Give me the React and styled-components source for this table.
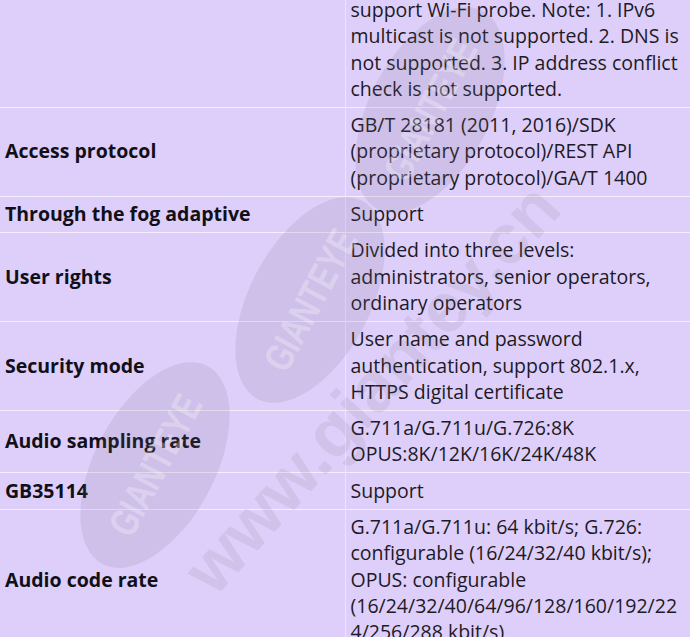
import styled, { createGlobalStyle } from "styled-components";

const GlobalStyle = createGlobalStyle`
    html, body {
        margin: 0;
        padding: 0;
        background: #ddcff9;
    }
    body {
        font-family: "Open Sans", "Noto Sans", sans-serif;
        color: #1d1a26;
        overflow: hidden;
    }
`;

const Page = styled.div`
    position: relative;
    width: 690px;
    height: 637px;
    overflow: hidden;
    background: #ddcff9;
`;

const Table = styled.table`
    width: 690px;
    margin-top: -7.5px;
    border-collapse: collapse;
    table-layout: fixed;
    font-size: 19.5px;
    line-height: 26.3px;
`;

const LabelCol = styled.col`
    width: 345px;
`;

const Row = styled.tr`
    border-bottom: 1px solid #f4eefe;
`;

const LabelCell = styled.td`
    padding: 4.5px 5px;
    vertical-align: middle;
    font-weight: 700;
    color: #111018;
    border-right: 1px solid #ece3fd;
    white-space: nowrap;
`;

const ValueCell = styled.td`
    padding: 4.5px 5px;
    vertical-align: top;
    overflow-wrap: anywhere;
`;

const Watermark = styled.svg`
    position: absolute;
    inset: 0;
    pointer-events: none;
`;

const rows = [
    {
        label: "",
        value: "support Wi-Fi probe. Note: 1. IPv6 multicast is not supported. 2. DNS is not supported. 3. IP address conflict check is not supported.",
    },
    {
        label: "Access protocol",
        value: "GB/T 28181 (2011, 2016)/SDK (proprietary protocol)/REST API (proprietary protocol)/GA/T 1400",
    },
    { label: "Through the fog adaptive", value: "Support" },
    {
        label: "User rights",
        value: "Divided into three levels: administrators, senior operators, ordinary operators",
    },
    {
        label: "Security mode",
        value: "User name and password authentication, support 802.1.x, HTTPS digital certificate",
    },
    {
        label: "Audio sampling rate",
        value: "G.711a/G.711u/G.726:8K OPUS:8K/12K/16K/24K/48K",
    },
    { label: "GB35114", value: "Support" },
    {
        label: "Audio code rate",
        value: "G.711a/G.711u: 64 kbit/s; G.726: configurable (16/24/32/40 kbit/s); OPUS: configurable (16/24/32/40/64/96/128/160/192/224/256/288 kbit/s)",
    },
];

function Badge({ x, y, angle }) {
    return (
        <g transform={`translate(${x} ${y}) rotate(${angle})`}>
            <ellipse rx="112" ry="60" fill="rgba(120,110,135,0.15)" />
            <text
                x="0"
                y="14"
                textAnchor="middle"
                fontFamily="'Liberation Sans', sans-serif"
                fontWeight="700"
                fontSize="40"
                fill="rgba(255,255,255,0.3)"
                transform="scale(0.75 1)"
            >
                GIANTEYE
            </text>
        </g>
    );
}

function App() {
    return (
        <>
            <GlobalStyle />
            <Page>
                <Table>
                    <colgroup>
                        <LabelCol />
                        <col />
                    </colgroup>
                    <tbody>
                        {rows.map((row, i) => (
                            <Row key={i}>
                                <LabelCell>{row.label}</LabelCell>
                                <ValueCell>{row.value}</ValueCell>
                            </Row>
                        ))}
                    </tbody>
                </Table>

                <Watermark width="690" height="637" viewBox="0 0 690 637">
                    <Badge x={430} y={110} angle={-62} />
                    <Badge x={310} y={300} angle={-62} />
                    <Badge x={155} y={465} angle={-62} />
                    <text
                        transform="translate(215 598) rotate(-48)"
                        fontFamily="'Liberation Sans', sans-serif"
                        fontWeight="700"
                        fontSize="70"
                        fill="rgba(120,110,135,0.13)"
                    >
                        www.giantey.cn
                    </text>
                </Watermark>
            </Page>
        </>
    );
}

export default App;
